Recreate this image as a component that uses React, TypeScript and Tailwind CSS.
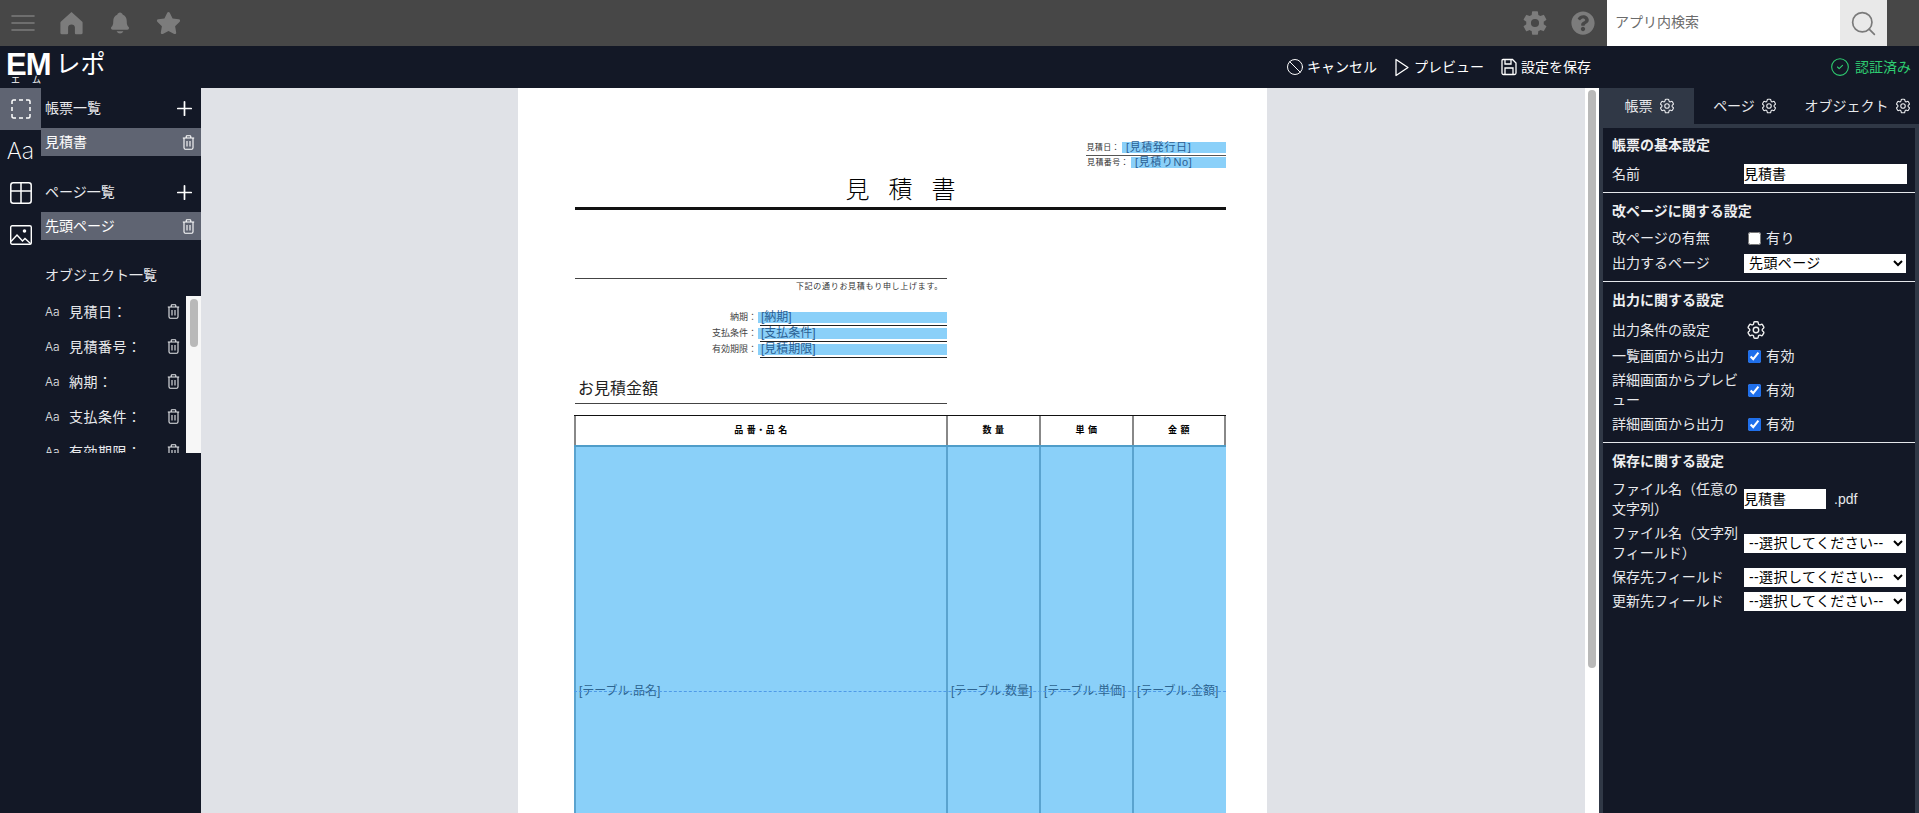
import { Ban, CircleCheck, Plus, Search } from 'lucide-react';
import { FaQuestionCircle, FaStar } from 'react-icons/fa';
import { HiOutlineCog6Tooth } from 'react-icons/hi2';
import { IoNotifications, IoSettingsSharp } from 'react-icons/io5';

const FONT = '[font-family:"Liberation_Sans","Noto_Sans_CJK_JP",sans-serif]';

function TrashIcon({ className = 'w-[13px] h-[15px]' }: { className?: string }) {
  return (
    <svg className={className} viewBox="0 0 13 15" fill="none" stroke="currentColor" strokeWidth={1.1}>
      <path d="M.8 3h11.4M4.2 3V1.6c0-.5.3-.8.8-.8h3c.5 0 .8.3.8.8V3M2 3v9.8c0 .8.5 1.4 1.3 1.4h6.4c.8 0 1.3-.6 1.3-1.4V3M5 6v5.5M8 6v5.5" />
    </svg>
  );
}

function HomeIcon() {
  return (
    <svg className="w-[23px] h-[24px]" viewBox="0 0 23 24" fill="currentColor">
      <path d="M11.5 1 1 10.4c-.4.4-.6.8-.6 1.3V22c0 .7.5 1.2 1.2 1.2h5.6c.5 0 .9-.4.9-.9v-5.8c0-1.7 1.4-3 3.4-3s3.4 1.3 3.4 3v5.8c0 .5.4.9.9.9h5.6c.7 0 1.2-.5 1.2-1.2V11.7c0-.5-.2-.9-.6-1.3L11.5 1Z" />
    </svg>
  );
}

function MenuIcon() {
  return (
    <svg className="w-[24px] h-[18px]" viewBox="0 0 24 18" fill="none" stroke="currentColor" strokeWidth={1.6} strokeLinecap="round">
      <path d="M1 2h22M1 9h22M1 16h22" />
    </svg>
  );
}

function PreviewIcon() {
  return (
    <svg className="w-[18px] h-[19px]" viewBox="0 0 18 19" fill="none" stroke="currentColor" strokeWidth={1.3} strokeLinejoin="round">
      <path d="M3 1.5 15 9.5 3 17.5Z" />
    </svg>
  );
}

function SaveIcon() {
  return (
    <svg className="w-[18px] h-[18px]" viewBox="0 0 18 18" fill="none" stroke="currentColor" strokeWidth={1.3}>
      <path d="M3 1.5h9.5L16 5v10c0 .9-.6 1.5-1.5 1.5h-11C2.6 16.5 2 15.9 2 15V2.5c0-.6.4-1 1-1Z" />
      <path d="M5 1.5V6h6V1.5M5 16.5V10h8v6.5" />
    </svg>
  );
}

function RailIcons() {
  return (
    <div className="w-[41px] shrink-0 flex flex-col text-white">
      <div className="h-[42px] bg-[#5f6472] flex items-center justify-center">
        <svg className="w-[20px] h-[20px]" viewBox="0 0 20 20" fill="none" stroke="currentColor" strokeWidth={1.5}>
          <path d="M1 5V2.5C1 1.6 1.6 1 2.5 1H5M8 1h4M15 1h2.5c.9 0 1.5.6 1.5 1.5V5M19 8v4M19 15v2.5c0 .9-.6 1.5-1.5 1.5H15M12 19H8M5 19H2.5C1.6 19 1 18.4 1 17.5V15M1 12V8" />
        </svg>
      </div>
      <div className="h-[42px] flex items-center justify-center text-[23px] font-extralight leading-none [font-family:Inter,sans-serif]">Aa</div>
      <div className="h-[42px] flex items-center justify-center">
        <svg className="w-[22px] h-[22px]" viewBox="0 0 22 22" fill="none" stroke="currentColor" strokeWidth={1.5}>
          <rect x="0.8" y="0.8" width="20.4" height="20.4" rx="2.5" />
          <path d="M.8 9h20.4M11 .8v20.4" />
        </svg>
      </div>
      <div className="h-[42px] flex items-center justify-center">
        <svg className="w-[22px] h-[20px]" viewBox="0 0 22 20" fill="none" stroke="currentColor" strokeWidth={1.4}>
          <rect x="0.7" y="0.7" width="20.6" height="18.6" rx="1.5" />
          <path d="M1 16.5 7 10l5.500 6 2.500-2.500 6 5.500" />
          <circle cx="14.5" cy="6" r="1.1" fill="currentColor" />
        </svg>
      </div>
    </div>
  );
}

function ListHead({ label }: { label: string }) {
  return (
    <div className="h-[40px] flex items-center justify-between pl-[4px] pr-[5px] text-sm text-[#e8e9ec]">
      {label}
      <Plus className="w-[23px] h-[23px] text-white" strokeWidth={1.8} />
    </div>
  );
}

function SelectedRow({ label }: { label: string }) {
  return (
    <div className="h-[28px] bg-[#5f6472] flex items-center justify-between pl-[4px] pr-[6px] text-sm text-white">
      {label}
      <TrashIcon />
    </div>
  );
}

function ObjectRow({ label }: { label: string }) {
  return (
    <div className="h-[35px] shrink-0 flex items-center pl-[4px] pr-[6px] text-sm text-[#e8e9ec]">
      <span className="w-[24px] text-[12px] font-light [font-family:Inter,sans-serif]">Aa</span>
      <span className="flex-1 tracking-[0.5px]">{label}</span>
      <TrashIcon />
    </div>
  );
}

function Sidebar() {
  return (
    <aside className="w-[201px] shrink-0 flex">
      <RailIcons />
      <div className="w-[160px] flex flex-col">
        <ListHead label="帳票一覧" />
        <SelectedRow label="見積書" />
        <div className="h-[16px]" />
        <ListHead label="ページ一覧" />
        <SelectedRow label="先頭ページ" />
        <div className="h-[20px]" />
        <div className="h-[30px] flex items-center pl-[4px] text-sm text-[#e8e9ec]">オブジェクト一覧</div>
        <div className="h-[157px] mt-[6px] flex overflow-hidden">
          <div className="w-[145px] flex flex-col -mt-[2px]">
            <ObjectRow label="見積日：" />
            <ObjectRow label="見積番号：" />
            <ObjectRow label="納期：" />
            <ObjectRow label="支払条件：" />
            <ObjectRow label="有効期限：" />
          </div>
          <div className="w-[15px] bg-[#f7f7f7] pt-[3px] pl-[4px]">
            <div className="w-[8px] h-[48px] rounded-full bg-[#b9b9b9]" />
          </div>
        </div>
      </div>
    </aside>
  );
}

function ReportPage() {
  return (
    <div className="relative w-[749px] h-[1060px] mx-auto bg-white text-black">
      <div className="absolute left-[568px] top-[67px] w-[140px] h-[1px] bg-[#555]" />
      <div className="absolute left-[568px] top-[54px] w-[140px] flex justify-end text-[8px] leading-[11px] text-[#333]">
        <span className="mr-[2px] tracking-[0.4px]">見積日：</span>
        <span className="w-[104px] bg-[#8ad0f9] text-[#2a5f93] text-[11px] leading-[11px] pl-[4px] tracking-[0.6px]">[見積発行日]</span>
      </div>
      <div className="absolute left-[568px] top-[69px] w-[140px] flex justify-end text-[8px] leading-[11px] text-[#333]">
        <span className="mr-[2px] tracking-[0.4px]">見積番号：</span>
        <span className="w-[95px] bg-[#8ad0f9] text-[#2a5f93] text-[11px] leading-[11px] pl-[4px] tracking-[0.6px]">[見積りNo]</span>
      </div>

      <div className="absolute left-[57px] top-[83px] w-[651px] h-[39px] pt-[2px] flex items-center justify-center gap-[19px] text-[24px] border-b-[3px] border-[#111] font-light">
        <span>見</span>
        <span>積</span>
        <span>書</span>
      </div>

      <div className="absolute left-[57px] top-[190px] w-[372px] border-t border-[#444] pr-[4px] pt-[1px] text-right text-[8px] leading-[14px] tracking-[0.7px] text-[#333]">
        下記の通りお見積もり申し上げます。
      </div>

      <div className="absolute left-[57px] top-[224px] w-[372px] flex flex-col text-[9px] text-[#444]">
        {[
          ['納期：', '[納期]'],
          ['支払条件：', '[支払条件]'],
          ['有効期限：', '[見積期限]'],
        ].map(([label, value]) => (
          <div key={label} className="flex justify-end h-[16px]">
            <span className="mr-[1px] leading-[11px]">{label}</span>
            <div className="w-[189px] flex flex-col">
              <span className="h-[11px] bg-[#8ad0f9] text-[#2a5f93] pl-[3px] text-[12px] leading-[11px]">{value}</span>
              <span className="ml-[2px] mt-[2px] h-[1px] bg-[#222]" />
            </div>
          </div>
        ))}
      </div>

      <div className="absolute left-[57px] top-[288px] w-[372px] border-b border-[#444] pl-[3px] pb-[1px] text-base leading-[26px] text-[#222]">
        お見積金額
      </div>

      <div className="absolute left-[56px] top-[327px] w-[652px]">
        <div className="grid grid-cols-[372px_93px_93px_94px] h-[30px] border-t border-[#111] text-[9px] font-bold tracking-[0.5px]">
          {['品 番・品 名', '数 量', '単 価', '金 額'].map((h) => (
            <div key={h} className="flex items-center justify-center border-l-[2px] border-[#888] last:border-r-[2px]">
              {h}
            </div>
          ))}
        </div>
        <div className="relative grid grid-cols-[372px_93px_93px_94px] h-[490px] bg-[#8ad0f9] border-t-2 border-[#4f9dc9] text-[12px] text-[#2d6490]">
          {['[テーブル.品名]', '[テーブル.数量]', '[テーブル.単価]', '[テーブル.金額]'].map((c) => (
            <div key={c} className="flex items-center pl-[3px] border-l-[2px] border-[#5aa3cf] last:border-r-[2px]">
              {c}
            </div>
          ))}
          <div className="absolute inset-x-0 top-[244px] border-t border-dashed border-[#4f9be8]" />
        </div>
      </div>
    </div>
  );
}

function Label({ children }: { children: React.ReactNode }) {
  return <div className="w-[132px] shrink-0 text-sm leading-[20px] text-[#e8e9ec]">{children}</div>;
}

function SectionTitle({ children }: { children: React.ReactNode }) {
  return <h3 className="text-sm font-bold leading-[21px] text-[#eeeff1]">{children}</h3>;
}

function CheckRow({ label, text, checked = true }: { label: React.ReactNode; text: string; checked?: boolean }) {
  return (
    <div className="flex items-center">
      <Label>{label}</Label>
      <label className="flex items-center pl-[4px] text-sm leading-[20px] text-[#e8e9ec]">
        <input type="checkbox" defaultChecked={checked} className="m-0 w-[13px] h-[13px] accent-[#1f6feb]" />
        <span className="ml-[5px] tracking-[0.4px]">{text}</span>
      </label>
    </div>
  );
}

function PanelSelect({ value }: { value: string }) {
  return (
    <select defaultValue={value} className="w-[163px] h-[19px] bg-white text-black text-sm leading-[19px] px-[1px] tracking-[0.4px]">
      <option>{value}</option>
    </select>
  );
}

function TabLabel({ text, className }: { text: string; className: string }) {
  return (
    <div className={`h-[36px] flex items-center justify-center gap-[5px] text-sm text-[#e8e9ec] ${className}`}>
      {text}
      <HiOutlineCog6Tooth className="w-[18px] h-[18px]" />
    </div>
  );
}

function SettingsPanel() {
  return (
    <aside className="w-[320px] shrink-0 flex flex-col">
      <div className="flex">
        <TabLabel text="帳票" className="w-[95px] pl-[7px] bg-[#303846]" />
        <TabLabel text="ページ" className="w-[103px]" />
        <TabLabel text="オブジェクト" className="w-[122px]" />
      </div>
      <div className="flex-1 bg-[#303846] pt-[4px] px-[4px]">
        <div className="h-full bg-[#131826]">
          <section className="h-[65px] px-[9px] pt-[7px] border-b border-[#e5e7eb]">
            <SectionTitle>帳票の基本設定</SectionTitle>
            <div className="flex items-center mt-[8px]">
              <Label>名前</Label>
              <input readOnly value="見積書" className="w-[163px] h-[20px] bg-white text-black text-sm px-0" />
            </div>
          </section>
          <section className="h-[89px] px-[9px] pt-[8px] border-b border-[#e5e7eb]">
            <SectionTitle>改ページに関する設定</SectionTitle>
            <div className="mt-[6px] flex flex-col gap-[5px]">
              <CheckRow label="改ページの有無" text="有り" checked={false} />
              <div className="flex items-center">
                <Label>出力するページ</Label>
                <PanelSelect value="先頭ページ" />
              </div>
            </div>
          </section>
          <section className="h-[161px] px-[9px] pt-[8px] border-b border-[#e5e7eb]">
            <SectionTitle>出力に関する設定</SectionTitle>
            <div className="mt-[8px] flex flex-col gap-[4px]">
              <div className="flex items-center mb-[1px]">
                <Label>出力条件の設定</Label>
                <HiOutlineCog6Tooth className="w-[22px] h-[22px] ml-[1px] text-[#f0f0f0]" />
              </div>
              <CheckRow label="一覧画面から出力" text="有効" />
              <CheckRow label="詳細画面からプレビュー" text="有効" />
              <CheckRow label="詳細画面から出力" text="有効" />
            </div>
          </section>
          <section className="px-[9px] pt-[8px]">
            <SectionTitle>保存に関する設定</SectionTitle>
            <div className="mt-[7px] flex flex-col gap-[4px]">
              <div className="flex items-center">
                <Label>ファイル名（任意の文字列）</Label>
                <input readOnly value="見積書" className="w-[82px] h-[20px] bg-white text-black text-sm px-0" />
                <span className="ml-[8px] text-sm text-[#e8e9ec]">.pdf</span>
              </div>
              <div className="flex items-center">
                <Label>ファイル名（文字列フィールド）</Label>
                <PanelSelect value="--選択してください--" />
              </div>
              <div className="flex items-center">
                <Label>保存先フィールド</Label>
                <PanelSelect value="--選択してください--" />
              </div>
              <div className="flex items-center">
                <Label>更新先フィールド</Label>
                <PanelSelect value="--選択してください--" />
              </div>
            </div>
          </section>
        </div>
      </div>
    </aside>
  );
}

export default function App() {
  return (
    <div className={`w-[1919px] h-[813px] flex flex-col overflow-hidden bg-[#131826] ${FONT}`}>
      {/* dimmed app header */}
      <header className="h-[46px] shrink-0 bg-[#474747] flex items-center pl-[11px] text-[#7c7c7c]">
        <MenuIcon />
        <div className="ml-[25px] flex items-center gap-[25px]">
          <HomeIcon />
          <IoNotifications className="w-[24px] h-[24px]" />
          <FaStar className="-ml-[1px] w-[25px] h-[24px]" />
        </div>
        <div className="ml-auto flex items-center gap-[23px]">
          <IoSettingsSharp className="w-[26px] h-[26px]" />
          <FaQuestionCircle className="w-[24px] h-[24px]" />
        </div>
        <div className="ml-[12px] mr-[32px] w-[280px] h-[46px] flex">
          <div className="flex-1 bg-white flex items-center pl-[8px] pb-[2px] text-sm text-[#6b6b6b]">アプリ内検索</div>
          <div className="w-[47px] bg-[#e9e9e9] flex items-center justify-center text-[#7a7a7a]">
            <Search className="w-[29px] h-[29px]" strokeWidth={1.4} />
          </div>
        </div>
      </header>

      <div className="h-[42px] shrink-0 flex items-center text-white">
        <div className="relative w-[200px] h-full pl-[6px] pb-[6px] flex items-center">
          <span className="text-[31px] font-bold leading-none tracking-[-1px]">EM</span>
          <span className="ml-[5px] text-[25px] leading-none">レポ</span>
          <span className="absolute left-[11px] top-[29px] text-[9px] leading-[10px] tracking-[12px]">エム</span>
        </div>
        <div className="ml-auto flex items-center gap-[16px] text-sm">
          <div className="flex items-center gap-[3px]"><Ban className="w-[18px] h-[18px]" strokeWidth={1.3} />キャンセル</div>
          <div className="flex items-center gap-[3px]"><PreviewIcon />プレビュー</div>
          <div className="flex items-center gap-[3px]"><SaveIcon />設定を保存</div>
        </div>
        <div className="ml-[239px] mr-[8px] flex items-center gap-[5px] text-sm text-[#2ecc71]">
          <CircleCheck className="w-[20px] h-[20px]" strokeWidth={1.3} />認証済み
        </div>
      </div>

      <div className="flex-1 flex min-h-0">
        <Sidebar />
        <main className="flex-1 overflow-hidden bg-[#e0e2e7] pr-[1px]">
          <ReportPage />
        </main>
        <div className="w-[14px] shrink-0 bg-white pt-[2px] pl-[3px]">
          <div className="w-[8px] h-[578px] rounded-full bg-[#b9b9b9]" />
        </div>
        <SettingsPanel />
      </div>
    </div>
  );
}
